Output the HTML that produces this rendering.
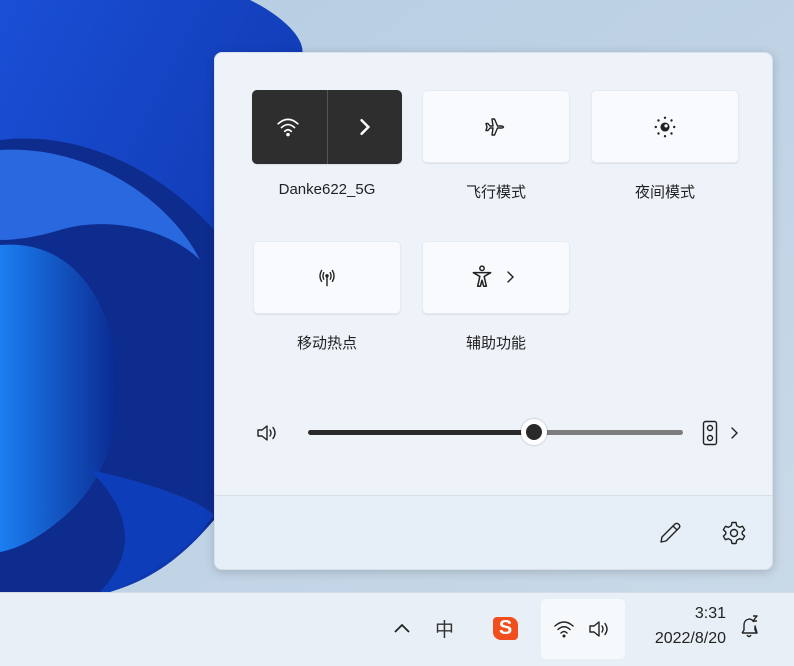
<!DOCTYPE html>
<html><head><meta charset="utf-8"><style>
*{margin:0;padding:0;box-sizing:border-box}
body{width:794px;height:666px;overflow:hidden;position:relative;font-family:"Liberation Sans","Noto Sans CJK SC",sans-serif;background:#c3d5e6}
.abs{position:absolute}
.panel{left:214px;top:52px;width:559px;height:518px;border-radius:8px;background:#eef3f9;box-shadow:0 2px 10px rgba(0,0,0,.18);overflow:hidden;border:1px solid #d8e0ea}
.btn{position:absolute;background:#f8fafd;border-radius:5px;box-shadow:0 1px 1px rgba(0,0,0,.08);border:1px solid #e6ebf1}
.lbl{position:absolute;width:150px;text-align:center;font-size:15px;color:#222}
.foot{position:absolute;left:0;top:442px;width:100%;height:76px;background:#e6eef7;border-top:1px solid #d6dee8}
.task{left:0;top:592px;width:794px;height:74px;background:#e9eff6;border-top:1px solid #d4dde8}
</style></head><body>
<svg class="abs" style="left:0;top:0" width="794" height="600" viewBox="0 0 794 600">
<defs>
<linearGradient id="bg" x1="0" y1="0" x2="1" y2="1"><stop offset="0" stop-color="#b5cce2"/><stop offset="1" stop-color="#c9d9e8"/></linearGradient>
<linearGradient id="b1" x1="0" y1="0" x2="1" y2="1"><stop offset="0" stop-color="#1a4fd6"/><stop offset="1" stop-color="#0b2fa0"/></linearGradient>
<linearGradient id="b2" x1="0" y1="0" x2="1" y2="0"><stop offset="0" stop-color="#1c7ff2"/><stop offset="1" stop-color="#0a2a90"/></linearGradient>
</defs>
<rect width="794" height="600" fill="url(#bg)"/>
<path d="M0 0 L250 0 C290 20 310 45 300 60 L214 60 L214 520 C180 560 150 580 110 592 L0 592 Z" fill="url(#b1)"/>
<path d="M0 140 C80 130 160 170 214 230 L214 520 C170 560 140 580 100 592 L0 592 Z" fill="#0d2c8e"/>
<path d="M0 150 C90 145 170 200 200 260 C170 230 110 215 60 230 C40 236 20 240 0 240 Z" fill="#2a68e0"/>
<path d="M0 245 C60 240 100 280 115 350 C125 420 110 480 60 520 C30 545 10 550 0 552 Z" fill="url(#b2)"/>
<path d="M90 470 C140 480 200 500 214 515 C190 550 150 575 110 592 L100 592 C130 560 140 520 90 470 Z" fill="#0d3db8"/>
</svg>

<div class="abs panel">
  <div class="btn" style="left:37px;top:37px;width:150px;height:74px;background:#2e2e2e;border-color:#2e2e2e"></div>
  <div class="abs" style="left:112px;top:37px;width:1px;height:74px;background:#555"></div>
  <svg class="abs" style="left:61px;top:63px" width="24" height="22" viewBox="0 0 22 20"><g fill="none" stroke="#fff" stroke-width="1.5" stroke-linecap="round"><path d="M2 7 Q11 -1 20 7"/><path d="M5 10.5 Q11 5 17 10.5"/><path d="M8 14 Q11 11 14 14"/></g><circle cx="11" cy="17" r="1.6" fill="#fff"/></svg>
  <svg class="abs" style="left:142px;top:65px" width="16" height="18" viewBox="0 0 14 16"><path d="M4 2 L10 8 L4 14" fill="none" stroke="#fff" stroke-width="2.2" stroke-linecap="round"/></svg>
  <div class="lbl" style="left:37px;top:128px">Danke622_5G</div>

  <div class="btn" style="left:207px;top:37px;width:148px;height:73px"></div>
  <svg class="abs" style="left:268px;top:62px" width="24" height="24" viewBox="0 0 24 24"><path d="M3 8.5 L5 8.5 L7 11 L10 11 L9 4 L11.5 4 L14.5 11 L19 11 Q22 12 19 13 L14.5 13 L11.5 20 L9 20 L10 13 L7 13 L5 15.5 L3 15.5 L4 12 Z" fill="none" stroke="#222" stroke-width="1.4" stroke-linejoin="round"/></svg>
  <div class="lbl" style="left:206px;top:128px">飞行模式</div>

  <div class="btn" style="left:376px;top:37px;width:148px;height:73px"></div>
  <svg class="abs" style="left:437px;top:61px" width="26" height="26" viewBox="0 0 24 24"><circle cx="12" cy="12" r="4.2" fill="#222"/><circle cx="13" cy="11" r="1.5" fill="#fff"/><g fill="#222"><circle cx="12" cy="3.5" r="1.1"/><circle cx="12" cy="20.5" r="1.1"/><circle cx="3.5" cy="12" r="1.1"/><circle cx="20.5" cy="12" r="1.1"/><circle cx="6" cy="6" r="1.1"/><circle cx="18" cy="6" r="1.1"/><circle cx="6" cy="18" r="1.1"/><circle cx="18" cy="18" r="1.1"/></g></svg>
  <div class="lbl" style="left:375px;top:128px">夜间模式</div>

  <div class="btn" style="left:38px;top:188px;width:148px;height:73px"></div>
  <svg class="abs" style="left:99px;top:212px" width="26" height="24" viewBox="0 0 24 22"><g fill="none" stroke="#222" stroke-width="1.3" stroke-linecap="round"><path d="M7 5 Q4 10 7 15"/><path d="M17 5 Q20 10 17 15"/><path d="M9 7 Q7.5 10 9 13"/><path d="M15 7 Q16.5 10 15 13"/><path d="M12 10 L12 19"/></g><circle cx="12" cy="10" r="1.6" fill="#222"/></svg>
  <div class="lbl" style="left:37px;top:279px">移动热点</div>

  <div class="btn" style="left:207px;top:188px;width:148px;height:73px"></div>
  <svg class="abs" style="left:255px;top:211px" width="24" height="26" viewBox="0 0 22 24"><g fill="none" stroke="#222" stroke-width="1.4" stroke-linejoin="round"><circle cx="11" cy="4" r="2"/><path d="M3 8 L19 8 L13 11.5 L15 20.5 L12.5 20.5 L11 15 L9.5 20.5 L7 20.5 L9 11.5 Z"/></g></svg>
  <svg class="abs" style="left:290px;top:216px" width="12" height="16" viewBox="0 0 12 16"><path d="M3 3 L8 8 L3 13" fill="none" stroke="#222" stroke-width="1.4" stroke-linecap="round"/></svg>
  <div class="lbl" style="left:206px;top:279px">辅助功能</div>

  <svg class="abs" style="left:40px;top:369px" width="26" height="22" viewBox="0 0 26 22"><g fill="none" stroke="#222" stroke-width="1.4" stroke-linejoin="round" stroke-linecap="round"><path d="M3 8 L7 8 L12 4 L12 18 L7 14 L3 14 Z"/><path d="M15 8 Q17 11 15 14"/><path d="M18 5.5 Q22 11 18 16.5"/></g></svg>
  <div class="abs" style="left:93px;top:377px;width:226px;height:5px;border-radius:3px;background:#2a2a2a"></div>
  <div class="abs" style="left:319px;top:377px;width:149px;height:5px;border-radius:3px;background:#7c7c7c"></div>
  <div class="abs" style="left:306px;top:366px;width:26px;height:26px;border-radius:50%;background:#fff;box-shadow:0 0 2px rgba(0,0,0,.3)"></div>
  <div class="abs" style="left:311px;top:371px;width:16px;height:16px;border-radius:50%;background:#2a2a2a"></div>
  <svg class="abs" style="left:487px;top:367px" width="16" height="26" viewBox="0 0 16 26"><g fill="none" stroke="#222" stroke-width="1.4"><rect x="1.5" y="1.5" width="13" height="23" rx="2"/><circle cx="8" cy="8" r="2.5"/><circle cx="8" cy="18" r="2.5"/></g></svg>
  <svg class="abs" style="left:514px;top:372px" width="12" height="16" viewBox="0 0 12 16"><path d="M3 3 L8 8 L3 13" fill="none" stroke="#222" stroke-width="1.4" stroke-linecap="round"/></svg>

  <div class="foot">
    <svg class="abs" style="left:442px;top:24px" width="26" height="26" viewBox="0 0 26 26"><path d="M4 22 L5 17 L18 4 Q20 2.5 22 4.5 Q23.5 6.5 22 8 L9 21 Z M16 6 L20 10" fill="none" stroke="#222" stroke-width="1.4" stroke-linejoin="round"/></svg>
    <svg class="abs" style="left:506px;top:24px" width="26" height="26" viewBox="0 0 26 26"><g fill="none" stroke="#222" stroke-width="1.4" stroke-linejoin="round"><path d="M11 2.5 L15 2.5 L15.7 5.7 L18.5 7.3 L21.6 6.3 L23.6 9.8 L21.2 12 L21.2 14 L23.6 16.2 L21.6 19.7 L18.5 18.7 L15.7 20.3 L15 23.5 L11 23.5 L10.3 20.3 L7.5 18.7 L4.4 19.7 L2.4 16.2 L4.8 14 L4.8 12 L2.4 9.8 L4.4 6.3 L7.5 7.3 L10.3 5.7 Z"/><circle cx="13" cy="13" r="3.5"/></g></svg>
  </div>
</div>

<div class="abs task">
  <svg class="abs" style="left:392px;top:28px" width="20" height="14" viewBox="0 0 20 14"><path d="M3 11 L10 4 L17 11" fill="none" stroke="#222" stroke-width="1.8"/></svg>
  <div class="abs" style="left:435px;top:22px;font-size:19px;color:#333;font-family:'Noto Sans CJK SC',sans-serif">中</div>
  <div class="abs" style="left:493px;top:24px;width:25px;height:23px;background:#f04e1c;border-radius:4px 8px 4px 8px;color:#fff;font-weight:bold;font-size:20px;line-height:23px;text-align:center">S</div>
  <div class="abs" style="left:541px;top:6px;width:84px;height:60px;background:#f6f9fc;border-radius:5px"></div>
  <svg class="abs" style="left:553px;top:26px" width="22" height="20" viewBox="0 0 22 20"><g fill="none" stroke="#222" stroke-width="1.5" stroke-linecap="round"><path d="M2 7 Q11 -1 20 7"/><path d="M5 10.5 Q11 5 17 10.5"/><path d="M8 14 Q11 11 14 14"/></g><circle cx="11" cy="17" r="1.5" fill="#222"/></svg>
  <svg class="abs" style="left:587px;top:25px" width="26" height="22" viewBox="0 0 26 22"><g fill="none" stroke="#222" stroke-width="1.4" stroke-linejoin="round" stroke-linecap="round"><path d="M3 8 L7 8 L12 4 L12 18 L7 14 L3 14 Z"/><path d="M15 8 Q17 11 15 14"/><path d="M18 5.5 Q22 11 18 16.5"/></g></svg>
  <div class="abs" style="left:640px;top:12px;width:86px;text-align:right;font-size:16px;color:#222">3:31</div>
  <div class="abs" style="left:630px;top:37px;width:96px;text-align:right;font-size:16px;color:#222">2022/8/20</div>
  <svg class="abs" style="left:738px;top:22px" width="24" height="26" viewBox="0 0 24 26"><g fill="none" stroke="#222" stroke-width="1.4" stroke-linejoin="round"><path d="M4 18 L6 15 L6 10 Q6 5 11 4 M11 4 Q14 4 16 7 M17 11 L17 15 L19 18 Z M4 18 L19 18"/><path d="M9 20 Q11 23 13 20"/><path d="M15 1 L19 1 L15 6 L19 6"/></g></svg>
</div>
</body></html>
